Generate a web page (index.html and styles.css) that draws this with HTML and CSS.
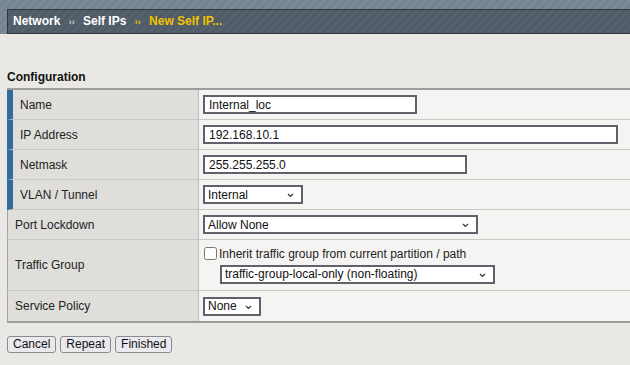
FILE: index.html
```html
<!DOCTYPE html>
<html lang="en">

<head>
    <meta charset="UTF-8">
    <title>New Self IP</title>
    <link rel="stylesheet" href="styles.css">
</head>

<body>
    <div class="top_strip">
        <div class="breadcrumb">
            <span class="crumb">Network</span>
            <span class="sep">&rsaquo;&rsaquo;</span>
            <span class="crumb">Self IPs</span>
            <span class="sep current">&rsaquo;&rsaquo;</span>
            <span class="crumb current">New Self IP...</span>
        </div>
    </div>

    <div class="content">
        <h3 class="section_title">Configuration</h3>
        <table class="config_table">
            <colgroup>
                <col class="label_col">
                <col>
            </colgroup>
            <tr>
                <td class="label required">Name</td>
                <td class="value"><input type="text" class="field name_field" value="Internal_loc"></td>
            </tr>
            <tr>
                <td class="label required">IP Address</td>
                <td class="value"><input type="text" class="field ip_field" value="192.168.10.1"></td>
            </tr>
            <tr>
                <td class="label required">Netmask</td>
                <td class="value"><input type="text" class="field mask_field" value="255.255.255.0"></td>
            </tr>
            <tr>
                <td class="label required">VLAN / Tunnel</td>
                <td class="value">
                    <span class="select_wrap">
                        <select class="field vlan_select">
                            <option>Internal</option>
                        </select>
                        <svg class="arrow" width="7" height="5" viewBox="0 0 7 5"><path d="M1 1 L3.5 3.5 L6 1" fill="none" stroke="#333" stroke-width="1.2"/></svg>
                    </span>
                </td>
            </tr>
            <tr>
                <td class="label">Port Lockdown</td>
                <td class="value">
                    <span class="select_wrap">
                        <select class="field port_select">
                            <option>Allow None</option>
                        </select>
                        <svg class="arrow" width="7" height="5" viewBox="0 0 7 5"><path d="M1 1 L3.5 3.5 L6 1" fill="none" stroke="#333" stroke-width="1.2"/></svg>
                    </span>
                </td>
            </tr>
            <tr class="tall">
                <td class="label">Traffic Group</td>
                <td class="value">
                    <label class="inherit"><input type="checkbox">Inherit traffic group from current partition / path</label>
                    <span class="select_wrap indent">
                        <select class="field group_select">
                            <option>traffic-group-local-only (non-floating)</option>
                        </select>
                        <svg class="arrow" width="7" height="5" viewBox="0 0 7 5"><path d="M1 1 L3.5 3.5 L6 1" fill="none" stroke="#333" stroke-width="1.2"/></svg>
                    </span>
                </td>
            </tr>
            <tr>
                <td class="label">Service Policy</td>
                <td class="value">
                    <span class="select_wrap">
                        <select class="field policy_select">
                            <option>None</option>
                        </select>
                        <svg class="arrow" width="7" height="5" viewBox="0 0 7 5"><path d="M1 1 L3.5 3.5 L6 1" fill="none" stroke="#333" stroke-width="1.2"/></svg>
                    </span>
                </td>
            </tr>
        </table>

        <div class="actions">
            <button class="button">Cancel</button>
            <button class="button">Repeat</button>
            <button class="button">Finished</button>
        </div>
    </div>
</body>

</html>
```

FILE: styles.css
```css
body {
    font-family: "Liberation Sans", Arial, sans-serif;
    font-size: 12px;
    background-color: #eae8e4;
    margin: 0;
    padding: 0;
    color: #222;
}

.top_strip {
    padding-top: 9px;
    background: repeating-linear-gradient(135deg, #7b8999 0, #7b8999 3px, #75838f 3px, #75838f 6px);
}

.breadcrumb {
    margin-left: 7px;
    height: 23px;
    line-height: 23px;
    padding-left: 5px;
    border-top: 1px solid #30353b;
    border-bottom: 1px solid #30353b;
    border-left: 1px solid #30353b;
    background: repeating-linear-gradient(135deg, #55616d 0, #55616d 3px, #4f5b67 3px, #4f5b67 6px);
    font-weight: bold;
    font-size: 12px;
    color: #fff;
}

.crumb {
    margin-right: 2px;
}

.sep {
    font-size: 9px;
    color: #c9ced4;
    margin: 0 5px 0 3px;
}

.current {
    color: #f2c200;
}

.content {
    padding: 36px 0 0 7px;
}

.section_title {
    font-size: 12px;
    font-weight: bold;
    margin: 0 0 4px 0;
    line-height: 14px;
    color: #111;
}

.config_table {
    width: 623px;
    table-layout: fixed;
    border-collapse: separate;
    border-spacing: 0;
    border-top: 2px solid #9d9d9d;
    border-bottom: 2px solid #9d9d9d;
}

.label_col {
    width: 192px;
}

.config_table td {
    border-bottom: 1px solid #c9c8c5;
    height: 30px;
    padding: 0;
    vertical-align: middle;
    box-sizing: border-box;
}

.config_table tr:last-child td {
    border-bottom: none;
    height: 30px;
}

.config_table tr.tall td {
    height: 51px;
}

.label {
    background-color: #dfdedb;
    border-left: 1px solid #a5a5a5;
    border-right: 1px solid #bdbcb9;
    padding-left: 7px !important;
    color: #222;
}

.label.required {
    border-left: 6px solid #336a9b;
}

.value {
    background-color: #f5f4f2;
    padding-left: 4px !important;
}

.field {
    box-sizing: border-box;
    height: 19px;
    border: 2px solid #62606a;
    border-radius: 0;
    background-color: #fff;
    font-family: "Liberation Sans", Arial, sans-serif;
    font-size: 12px;
    color: #111;
    padding: 0 4px;
    margin: 0;
    display: block;
}

.name_field {
    width: 214px;
}

.ip_field {
    width: 415px;
}

.mask_field {
    width: 264px;
}

.select_wrap {
    position: relative;
    display: inline-block;
    vertical-align: middle;
}

.select_wrap.indent {
    margin-left: 17px;
}

select.field {
    -webkit-appearance: none;
    appearance: none;
    padding: 0 14px 0 3px;
}

.arrow {
    position: absolute;
    right: 9px;
    top: 8px;
}

.vlan_select {
    width: 100px;
}

.port_select {
    width: 275px;
}

.group_select {
    width: 275px;
}

.policy_select {
    width: 58px;
}

.inherit {
    display: flex;
    align-items: center;
    margin-bottom: 4px;
}

.inherit input {
    margin: 0 2px 0 1px;
    width: 13px;
    height: 13px;
}

.actions {
    margin-top: 13px;
    display: flex;
    gap: 4px;
}

.button {
    font-family: "Liberation Sans", Arial, sans-serif;
    font-size: 12px;
    height: 17px;
    padding: 0 5px;
    border: 1px solid #8a8a90;
    border-radius: 3px;
    background-color: #e9e9ee;
    color: #111;
    line-height: 15px;
    cursor: pointer;
}

.button:hover {
    background-color: #dcdce4;
}
```
